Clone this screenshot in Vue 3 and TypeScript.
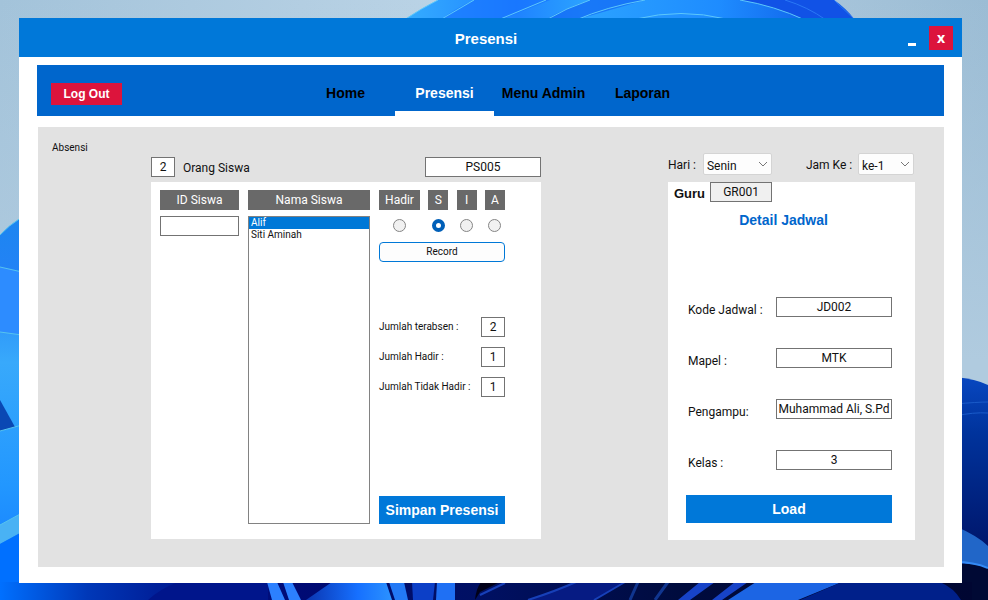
<script setup lang="ts">
import { ref } from 'vue'

interface Field { id: string; label: string; value: string }

const menu: string[] = ['Home', 'Presensi', 'Menu Admin', 'Laporan']
const activeMenu = ref('Presensi')

const students: string[] = ['Alif', 'Siti Aminah']
const selectedStudent = ref('Alif')
const studentId = ref('')

const statuses: string[] = ['Hadir', 'S', 'I', 'A']
const status = ref('S')

const totals = ref<Field[]>([
  { id: 'terabsen', label: 'Jumlah terabsen :', value: '2' },
  { id: 'hadir', label: 'Jumlah Hadir :', value: '1' },
  { id: 'tidak', label: 'Jumlah Tidak Hadir :', value: '1' },
])

const details = ref<Field[]>([
  { id: 'kode', label: 'Kode Jadwal :', value: 'JD002' },
  { id: 'mapel', label: 'Mapel :', value: 'MTK' },
  { id: 'pengampu', label: 'Pengampu:', value: 'Muhammad Ali, S.Pd' },
  { id: 'kelas', label: 'Kelas :', value: '3' },
])

const day = ref('Senin')
const hour = ref('ke-1')
const studentCount = ref('2')
const presenceCode = ref('PS005')
const teacherCode = ref('GR001')
</script>

<template>
  <div class="desktop">
    <svg class="wallpaper" viewBox="0 0 988 600" preserveAspectRatio="none" aria-hidden="true">
      <defs>
        <linearGradient id="sky" x1="0" y1="0" x2="1" y2="0">
          <stop offset="0" stop-color="#a3c3da" /><stop offset=".5" stop-color="#bdd5e7" /><stop offset="1" stop-color="#9bbcd4" />
        </linearGradient>
        <linearGradient id="haze" x1="0" y1="0" x2="0" y2="1">
          <stop offset="0" stop-color="#b0cbdf" stop-opacity="0" /><stop offset=".9" stop-color="#b0cbdf" />
        </linearGradient>
        <linearGradient id="petal" x1="0" y1="0" x2="1" y2="0">
          <stop offset="0" stop-color="#35adff" /><stop offset=".25" stop-color="#1f83ff" /><stop offset=".4" stop-color="#2ba2ff" />
          <stop offset=".7" stop-color="#1e8cff" /><stop offset="1" stop-color="#0b52e0" />
        </linearGradient>
        <linearGradient id="left" x1="0" y1="0" x2="0" y2="1">
          <stop offset="0" stop-color="#1c86f0" /><stop offset=".15" stop-color="#2382f6" /><stop offset=".38" stop-color="#38a9fb" />
          <stop offset=".7" stop-color="#2297ff" /><stop offset="1" stop-color="#1276ff" />
        </linearGradient>
        <linearGradient id="right" x1="0" y1="0" x2="0" y2="1">
          <stop offset="0" stop-color="#0847c0" /><stop offset=".25" stop-color="#00339c" /><stop offset=".8" stop-color="#001468" />
        </linearGradient>
        <linearGradient id="floor" x1="0" y1="0" x2="1" y2="0">
          <stop offset="0" stop-color="#0070ff" /><stop offset=".09" stop-color="#0038b8" /><stop offset=".16" stop-color="#00209a" />
          <stop offset=".3" stop-color="#000a75" /><stop offset=".5" stop-color="#001062" /><stop offset=".7" stop-color="#000b3d" /><stop offset="1" stop-color="#000632" />
        </linearGradient>
        <linearGradient id="blade" x1="0" y1="0" x2="1" y2="0">
          <stop offset="0" stop-color="#0a35b0" /><stop offset=".6" stop-color="#1670ff" /><stop offset="1" stop-color="#2b92ff" />
        </linearGradient>
      </defs>
      <rect width="988" height="600" fill="url(#sky)" />
      <rect width="988" height="400" fill="url(#haze)" />

      <path d="M404 20Q422 8 438 0H834Q846 8 855 20Z" fill="url(#petal)" />
      <path d="M474 0Q456 8 440 20H500L550 0Z" fill="#1670ff" opacity=".6" />
      <path d="M590 0Q565 8 545 20H575L645 0Z" fill="#0f63f5" opacity=".65" />
      <path d="M740 0Q775 6 805 20H853L834 0Z" fill="#1152e6" />
      <g fill="none" stroke="#5cc8fb">
        <path d="M404 20Q422 8 438 0M440 20L474 0M498 20L546 0M546 20Q566 8 590 0M576 20Q606 7 645 0M636 19Q681 8 726 19M740 0Q775 6 805 20" />
        <path d="M785 0Q808 7 826 20M834 0L855 20" stroke="#2a78f5" />
      </g>

      <path d="M0 235Q8 226 22 217V600H0Z" fill="url(#left)" />
      <path d="M0 267L22 272V335L0 332Z" fill="#2d8cff" />
      <path d="M0 400L15 427 0 431Z" fill="#0a48b4" />
      <path d="M0 525L22 513V532L0 544Z" fill="#49b2f4" />
      <path d="M0 544L22 532V600H0Z" fill="#0070ff" />
      <path d="M0 235Q8 226 22 217M0 267L22 272M0 332L22 335M0 431L22 425M0 525L22 513" fill="none" stroke="#56c4ee" />

      <path d="M955 377Q976 379 988 385V600H955Z" fill="url(#right)" />
      <path d="M955 404Q978 402 988 402M955 416Q974 412 988 413" fill="none" stroke="#1a5bc9" />
      <path d="M955 526Q978 536 988 546V571Q974 563 955 563Z" fill="#2166c8" />
      <path d="M955 564Q975 563 988 568V600H955Z" fill="#000934" />
      <path d="M955 562Q974 562 988 568" fill="none" stroke="#348af5" stroke-width="2" />

      <rect y="582" width="972" height="18" fill="url(#floor)" />
      <path d="M148 600Q160 589 178 582H268V600Z" fill="#00158b" />
      <path d="M267 582H277L285 600H272ZM283 582H292L301 600H289Z" fill="#2c80ff" />
      <path d="M306 600L332 582H386L392 600Z" fill="url(#blade)" />
      <path d="M389 582H404L408 600H395Z" fill="#2379f5" />
      <path d="M412 582H435L433 600H413Z" fill="#0c3fc7" />
      <path d="M437 582H455V600H436Z" fill="#1f70f4" />
      <path d="M475 600Q476 589 481 582H500L480 592Z" fill="#000018" />
      <path d="M528 600Q556 591 576 582H625L594 600Z" fill="#061b83" />
      <path d="M528 600Q556 591 576 582M594 600Q608 592 625 582M480 595L505 583" fill="none" stroke="#1740b8" stroke-width="2" />
      <path d="M630 600L638 582M655 600L668 582" stroke="#10358f" stroke-width="3" />
      <path d="M678 600L700 582H715L690 600ZM712 600L735 582H748L722 600Z" fill="#1743c8" />
      <path d="M728 600L756 582H842L798 600Z" fill="#1c65e4" />
      <path d="M800 600L842 582H940Q954 588 961 600Z" fill="#00208a" />
    </svg>

    <main class="window">
      <header class="titlebar">
        <h1>Presensi</h1>
        <div class="controls">
          <button class="minimize" type="button" aria-label="Minimize"><span></span></button>
          <button class="close" type="button">x</button>
        </div>
      </header>

      <nav class="nav">
        <button class="logout" type="button">Log Out</button>
        <div class="menu">
          <a v-for="item in menu" :key="item" href="#" :class="{ active: item === activeMenu }" @click.prevent="activeMenu = item">{{ item }}</a>
        </div>
      </nav>

      <section class="panel">
        <h2 class="caption">Absensi</h2>

        <div class="attendance">
          <div class="summary">
            <input id="count" v-model="studentCount" class="box tiny">
            <label for="count">Orang Siswa</label>
            <input v-model="presenceCode" class="box code" aria-label="Kode Presensi">
          </div>
          <div class="card form">
            <div class="column">
              <label class="chip" for="student-id">ID Siswa</label>
              <input id="student-id" v-model="studentId" class="box">
            </div>
            <div class="column">
              <label class="chip" for="student-list">Nama Siswa</label>
              <select id="student-list" v-model="selectedStudent" class="list" size="8">
                <option v-for="s in students" :key="s" :value="s">{{ s }}</option>
              </select>
            </div>
            <div class="column">
              <div class="statuses">
                <label v-for="s in statuses" :key="s">
                  <span class="chip">{{ s }}</span>
                  <input v-model="status" type="radio" name="status" :value="s">
                </label>
              </div>
              <button class="record" type="button">Record</button>
              <div class="totals">
                <div v-for="t in totals" :key="t.id" class="total">
                  <label :for="t.id">{{ t.label }}</label>
                  <input :id="t.id" v-model="t.value" class="box tiny">
                </div>
              </div>
              <button class="primary save" type="button">Simpan Presensi</button>
            </div>
          </div>
        </div>

        <div class="schedule">
          <div class="filters">
            <label for="day">Hari :</label>
            <span class="picker">
              <select id="day" v-model="day"><option>Senin</option></select>
              <svg viewBox="0 0 10 6" aria-hidden="true"><path d="M1 1l4 4 4-4" /></svg>
            </span>
            <label class="hour-label" for="hour">Jam Ke :</label>
            <span class="picker hour">
              <select id="hour" v-model="hour"><option>ke-1</option></select>
              <svg viewBox="0 0 10 6" aria-hidden="true"><path d="M1 1l4 4 4-4" /></svg>
            </span>
          </div>
          <div class="card">
            <div class="teacher">
              <label for="teacher">Guru</label>
              <input id="teacher" v-model="teacherCode" class="box" readonly>
            </div>
            <h2 class="heading">Detail Jadwal</h2>
            <div class="details">
              <div v-for="d in details" :key="d.id" class="detail">
                <label :for="d.id">{{ d.label }}</label>
                <input :id="d.id" v-model="d.value" class="box">
              </div>
            </div>
            <button class="primary load" type="button">Load</button>
          </div>
        </div>
      </section>
    </main>
  </div>
</template>

<style>
body { margin: 0; }
</style>

<style scoped>
* { box-sizing: border-box; }
h1, h2 { margin: 0; }
button, input, select { font: inherit; color: inherit; margin: 0; }
button { border: 0; padding: 0; }

.desktop {
  position: relative;
  display: flex;
  min-height: 100vh;
  padding: 18px 26px 17px 19px;
  font: 12px/20px Roboto, "Liberation Sans", sans-serif;
  color: #111;
}
.wallpaper { position: absolute; inset: 0; width: 100%; height: 100%; }
.window {
  position: relative;
  flex: 1;
  display: flex;
  flex-direction: column;
  min-width: 0;
  padding-bottom: 16px;
  background: #fff;
}

.titlebar {
  display: grid;
  grid-template-columns: 1fr auto 1fr;
  align-items: center;
  height: 39px;
  padding-right: 9px;
  background: #0078d9;
  color: #fff;
}
.titlebar h1 { grid-column: 2; padding-top: 2px; font: bold 15px/20px "Liberation Sans", sans-serif; }
.controls { display: flex; justify-content: flex-end; gap: 12px; }
.controls button { height: 24px; }
.minimize { display: flex; width: 10px; justify-content: center; align-items: flex-end; padding-bottom: 4px; background: none; }
.minimize span { width: 8px; height: 3px; background: #fff; }
.close { width: 24px; background: #dc143c; font: bold 14px/24px "Open Sans", sans-serif; }

.nav {
  display: flex;
  align-items: stretch;
  height: 51px;
  margin: 8px 18px 0;
  padding-left: 14px;
  background: #0066cc;
  font: bold 14px/20px "Liberation Sans", sans-serif;
}
.logout { align-self: center; width: 71px; height: 22px; margin-top: 6px; background: #dc143c; color: #fff; font-size: 12px; }
.menu { display: flex; margin-left: 174px; }
.menu a { width: 99px; padding-top: 18px; border-bottom: 5px solid transparent; color: #000; text-align: center; text-decoration: none; }
.menu a.active { color: #fff; border-color: #fff; }

.panel {
  flex: 1;
  display: flex;
  align-items: flex-start;
  margin: 11px 18px 0 19px;
  padding: 0 29px 27px 0;
  background: #e2e2e2;
}
.caption, .list, .total label { font-size: 10px; font-weight: normal; line-height: 20px; }
.caption { width: 113px; padding: 11px 0 0 14px; }
.card { background: #fff; }
.box {
  width: 100%;
  height: 20px;
  padding: 0 1px;
  border: 1px solid #737373;
  border-radius: 0;
  background: #fff;
  text-align: center;
}
.tiny { width: 24px; }

.attendance { width: 390px; padding-top: 30px; }
.summary { display: flex; }
.summary label { padding: 1px 0 0 8px; }
.code { width: 116px; margin-left: auto; }
.form { display: grid; grid-template-columns: 79px 122px 126px; gap: 9px; height: 357px; margin-top: 4px; padding: 8px 9px 15px; }
.column { display: flex; flex-direction: column; gap: 6px; }
.chip { display: block; height: 20px; background: #696969; color: #fff; text-align: center; }
.list {
  flex: 1;
  width: 100%;
  padding: 0;
  border: 1px solid #828282;
  border-radius: 0;
  background: #fff;
  overflow: hidden;
  outline: 0;
}
.list option { min-height: 12px; padding: 0 2px; line-height: 12px; }
.list option:checked { background: #0078d7 linear-gradient(#0078d7, #0078d7); color: #fff; }

.statuses { display: grid; grid-template-columns: 41px 20px 20px 20px; justify-content: space-between; }
.statuses label { display: flex; flex-direction: column; align-items: center; gap: 9px; }
.statuses .chip { width: 100%; }
.statuses input {
  appearance: none;
  width: 13px;
  height: 13px;
  border: 1px solid #858585;
  border-radius: 50%;
  background: #f1f1f1;
}
.statuses input:checked { border: 4px solid #005fb8; background: #fff; }
.record { height: 20px; margin-top: 4px; border: 1px solid #0078d7; border-radius: 4px; background: #fdfdfd; font-size: 10px; line-height: 18px; }
.totals { display: grid; gap: 10px; margin-top: 49px; }
.total { display: flex; justify-content: space-between; }
.total label { white-space: nowrap; }
.primary { height: 28px; background: #0078d9; color: #fff; font: bold 14px/28px "Liberation Sans", sans-serif; }
.save { margin-top: auto; }

.schedule { width: 247px; margin-left: auto; padding-top: 26px; }
.filters { display: flex; height: 24px; line-height: 24px; }
.picker { position: relative; width: 69px; height: 22px; margin-left: 7px; }
.picker select {
  appearance: none;
  width: 100%;
  height: 22px;
  padding: 0 3px;
  border: 1px solid #d4d4d4;
  border-radius: 2px;
  background: #fdfdfd;
}
.picker svg { position: absolute; top: 8px; right: 4px; width: 10px; height: 6px; fill: none; stroke: #777; }
.hour-label { margin-left: 34px; }
.picker.hour { width: 56px; margin: 0 1px 0 auto; }
.schedule .card { display: flex; flex-direction: column; height: 358px; margin-top: 5px; }
.teacher { display: flex; gap: 5px; padding-left: 6px; }
.teacher label { font: bold 13px/24px "Liberation Sans", sans-serif; }
.teacher .box { width: 62px; background: #f0f0f0; }
.heading { margin-top: 4px; padding-right: 16px; color: #0066cc; text-align: center; font: bold 14px/20px "Liberation Sans", sans-serif; }
.details { display: grid; gap: 27px; margin: 67px 23px 0 20px; }
.detail { display: flex; justify-content: space-between; }
.detail label { padding-top: 2px; line-height: 22px; }
.detail .box { width: 116px; }
.load { margin: auto 23px 17px 18px; }
</style>
